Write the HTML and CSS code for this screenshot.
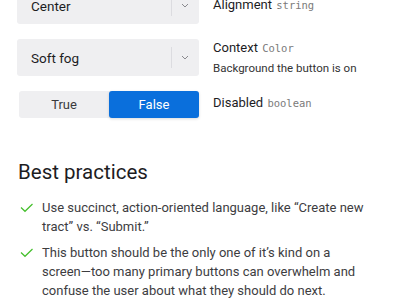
FILE: index.html
```html
<!DOCTYPE html>
<html>
<head>
<meta charset="utf-8">
<link rel="stylesheet" href="styles.css">
</head>
<body>
<div class="props">
  <div class="prop">
    <div class="control">
      <div class="select">
        <span class="select-text">Center</span>
        <span class="select-divider"></span>
        <svg class="chev" width="8" height="5" viewBox="0 0 8 5"><path d="M1 1l3 3 3-3" fill="none" stroke="#8a8a8e" stroke-width="1"/></svg>
      </div>
    </div>
    <div class="desc">
      <div class="name">Alignment <code class="type">string</code></div>
    </div>
  </div>
  <div class="prop">
    <div class="control">
      <div class="select">
        <span class="select-text">Soft fog</span>
        <span class="select-divider"></span>
        <svg class="chev" width="8" height="5" viewBox="0 0 8 5"><path d="M1 1l3 3 3-3" fill="none" stroke="#8a8a8e" stroke-width="1"/></svg>
      </div>
    </div>
    <div class="desc">
      <div class="name">Context <code class="type">Color</code></div>
      <div class="note">Background the button is on</div>
    </div>
  </div>
  <div class="prop">
    <div class="control">
      <div class="toggle">
        <span class="opt">True</span>
        <span class="opt opt-on">False</span>
      </div>
    </div>
    <div class="desc">
      <div class="name">Disabled <code class="type">boolean</code></div>
    </div>
  </div>
</div>

<h2 class="title">Best practices</h2>
<ul class="list">
  <li class="item">
    <svg class="check" width="13" height="10" viewBox="0 0 13 10"><path d="M1 4.5l4 3.8L12.5 1" fill="none" stroke="#45bf2d" stroke-width="1.2"/></svg>
    <p>Use succinct, action-oriented language, like “Create new tract” vs. “Submit.”</p>
  </li>
  <li class="item">
    <svg class="check" width="13" height="10" viewBox="0 0 13 10"><path d="M1 4.5l4 3.8L12.5 1" fill="none" stroke="#45bf2d" stroke-width="1.2"/></svg>
    <p>This button should be the only one of it’s kind on a screen—too many primary buttons can overwhelm and confuse the user about what they should do next.</p>
  </li>
</ul>
</body>
</html>
```
FILE: styles.css
```css
html, body {
  margin: 0;
  padding: 0;
  background: #ffffff;
}
body {
  font-family: Roboto, "Liberation Sans", sans-serif;
  color: #1d1d1f;
  padding-left: 17px;
  width: 400px;
  box-sizing: border-box;
  overflow: hidden;
}
.props {
  margin-top: -13px;
  display: flex;
  flex-direction: column;
  gap: 15px;
}
.prop {
  display: flex;
  gap: 14px;
}
.control {
  width: 182px;
  flex: none;
}
.select {
  height: 37px;
  background: #efeff1;
  border-radius: 3px;
  display: flex;
  align-items: center;
  padding-left: 14px;
  box-sizing: border-box;
}
.select-text {
  flex: 1;
  font-size: 13.5px;
  color: #1d1d1f;
}
.select-divider {
  width: 1px;
  height: 21px;
  background: #dcdce0;
}
.chev {
  margin: 0 10px 0 9px;
}
.toggle {
  margin-left: 2px;
  height: 27px;
  display: flex;
  background: #efeff1;
  border-radius: 3px;
}
.opt {
  flex: 1;
  display: flex;
  align-items: center;
  justify-content: center;
  font-size: 13px;
  color: #3a3a3c;
}
.opt-on {
  background: #0a6fdc;
  color: #ffffff;
  border-radius: 3px;
  box-shadow: 0 1px 3px rgba(0, 0, 0, 0.15);
}
.name {
  font-size: 13px;
  line-height: 16px;
  color: #1d1d1f;
}
.type {
  font-family: "DejaVu Sans Mono", "Liberation Mono", monospace;
  font-size: 10.5px;
  color: #7a7a7a;
  margin-left: 1px;
}
.note {
  margin-top: 5px;
  font-size: 11.5px;
  line-height: 15px;
  color: #333333;
}
.prop:first-child .desc {
  padding-top: 10px;
}
.prop:nth-child(2) .desc {
  padding-top: 1px;
}
.prop:nth-child(3) .desc {
  padding-top: 4px;
}
.title {
  margin: 40px 0 0 1px;
  font-size: 20.5px;
  line-height: 28px;
  font-weight: 400;
  color: #1d1d1f;
}
.list {
  list-style: none;
  margin: 12px 0 0 0;
  padding: 0;
  display: flex;
  flex-direction: column;
  gap: 7px;
}
.item {
  display: flex;
  gap: 9px;
  align-items: flex-start;
}
.check {
  flex: none;
  margin: 5px 0 0 3px;
}
.item p {
  margin: 0;
  font-size: 13px;
  line-height: 19px;
  color: #3d3d3f;
  width: 322px;
}
```
